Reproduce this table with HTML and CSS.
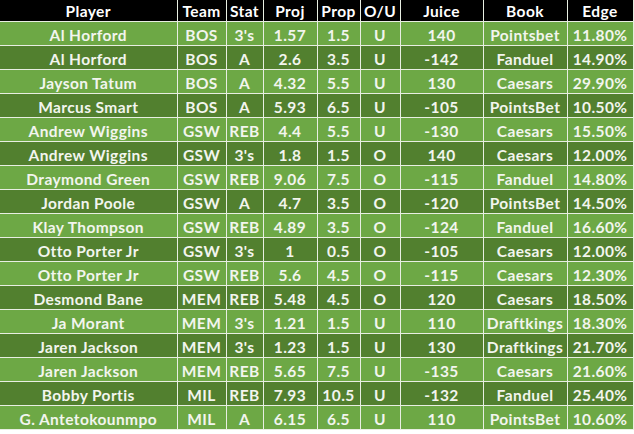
FILE: index.html
```html
<!DOCTYPE html>
<html>
<head>
<meta charset="utf-8">
<link rel="stylesheet" href="styles.css">
</head>
<body>
<table class="props">
<colgroup>
<col class="c-player"><col class="c-team"><col class="c-stat"><col class="c-proj"><col class="c-prop"><col class="c-ou"><col class="c-juice"><col class="c-book"><col class="c-edge">
</colgroup>
<thead>
<tr><th>Player</th><th>Team</th><th>Stat</th><th>Proj</th><th>Prop</th><th>O/U</th><th>Juice</th><th>Book</th><th>Edge</th></tr>
</thead>
<tbody>
<tr><td>Al Horford</td><td>BOS</td><td>3's</td><td>1.57</td><td>1.5</td><td>U</td><td>140</td><td>Pointsbet</td><td>11.80%</td></tr>
<tr><td>Al Horford</td><td>BOS</td><td>A</td><td>2.6</td><td>3.5</td><td>U</td><td>-142</td><td>Fanduel</td><td>14.90%</td></tr>
<tr><td>Jayson Tatum</td><td>BOS</td><td>A</td><td>4.32</td><td>5.5</td><td>U</td><td>130</td><td>Caesars</td><td>29.90%</td></tr>
<tr><td>Marcus Smart</td><td>BOS</td><td>A</td><td>5.93</td><td>6.5</td><td>U</td><td>-105</td><td>PointsBet</td><td>10.50%</td></tr>
<tr><td>Andrew Wiggins</td><td>GSW</td><td>REB</td><td>4.4</td><td>5.5</td><td>U</td><td>-130</td><td>Caesars</td><td>15.50%</td></tr>
<tr><td>Andrew Wiggins</td><td>GSW</td><td>3's</td><td>1.8</td><td>1.5</td><td>O</td><td>140</td><td>Caesars</td><td>12.00%</td></tr>
<tr><td>Draymond Green</td><td>GSW</td><td>REB</td><td>9.06</td><td>7.5</td><td>O</td><td>-115</td><td>Fanduel</td><td>14.80%</td></tr>
<tr><td>Jordan Poole</td><td>GSW</td><td>A</td><td>4.7</td><td>3.5</td><td>O</td><td>-120</td><td>PointsBet</td><td>14.50%</td></tr>
<tr><td>Klay Thompson</td><td>GSW</td><td>REB</td><td>4.89</td><td>3.5</td><td>O</td><td>-124</td><td>Fanduel</td><td>16.60%</td></tr>
<tr><td>Otto Porter Jr</td><td>GSW</td><td>3's</td><td>1</td><td>0.5</td><td>O</td><td>-105</td><td>Caesars</td><td>12.00%</td></tr>
<tr><td>Otto Porter Jr</td><td>GSW</td><td>REB</td><td>5.6</td><td>4.5</td><td>O</td><td>-115</td><td>Caesars</td><td>12.30%</td></tr>
<tr><td>Desmond Bane</td><td>MEM</td><td>REB</td><td>5.48</td><td>4.5</td><td>O</td><td>120</td><td>Caesars</td><td>18.50%</td></tr>
<tr><td>Ja Morant</td><td>MEM</td><td>3's</td><td>1.21</td><td>1.5</td><td>U</td><td>110</td><td>Draftkings</td><td>18.30%</td></tr>
<tr><td>Jaren Jackson</td><td>MEM</td><td>3's</td><td>1.23</td><td>1.5</td><td>U</td><td>130</td><td>Draftkings</td><td>21.70%</td></tr>
<tr><td>Jaren Jackson</td><td>MEM</td><td>REB</td><td>5.65</td><td>7.5</td><td>U</td><td>-135</td><td>Caesars</td><td>21.60%</td></tr>
<tr><td>Bobby Portis</td><td>MIL</td><td>REB</td><td>7.93</td><td>10.5</td><td>U</td><td>-132</td><td>Fanduel</td><td>25.40%</td></tr>
<tr><td>G. Antetokounmpo</td><td>MIL</td><td>A</td><td>6.15</td><td>6.5</td><td>U</td><td>110</td><td>PointsBet</td><td>10.60%</td></tr>
</tbody>
</table>
</body>
</html>
```

FILE: styles.css
```css
html, body {
  margin: 0;
  padding: 0;
  background: #ffffff;
}

.props {
  border-collapse: collapse;
  table-layout: fixed;
  width: 633px;
  font-family: Lato, "Open Sans", sans-serif;
  font-weight: 700;
  font-size: 15.5px;
  letter-spacing: 0.4px;
  color: #f2f5ee;
}

.c-player { width: 177px; }
.c-team { width: 49px; }
.c-stat { width: 37px; }
.c-proj { width: 54px; }
.c-prop { width: 43px; }
.c-ou { width: 40px; }
.c-juice { width: 83px; }
.c-book { width: 84px; }
.c-edge { width: 66px; }

.props th,
.props td {
  border: 1px solid #e8eee2;
  padding: 3px 0 0;
  text-align: center;
  white-space: nowrap;
  overflow: hidden;
  line-height: 19px;
}

.props thead th {
  background: #000000;
  color: #ffffff;
  height: 19px;
  padding-top: 2px;
  border-top: none;
  border-left: none;
}

.props tbody td {
  height: 20px;
}

.props tbody td:first-child {
  border-left: none;
}

.props tbody tr:nth-child(odd) td {
  background: #6da845;
}

.props tbody tr:nth-child(even) td {
  background: #52802f;
}
```
